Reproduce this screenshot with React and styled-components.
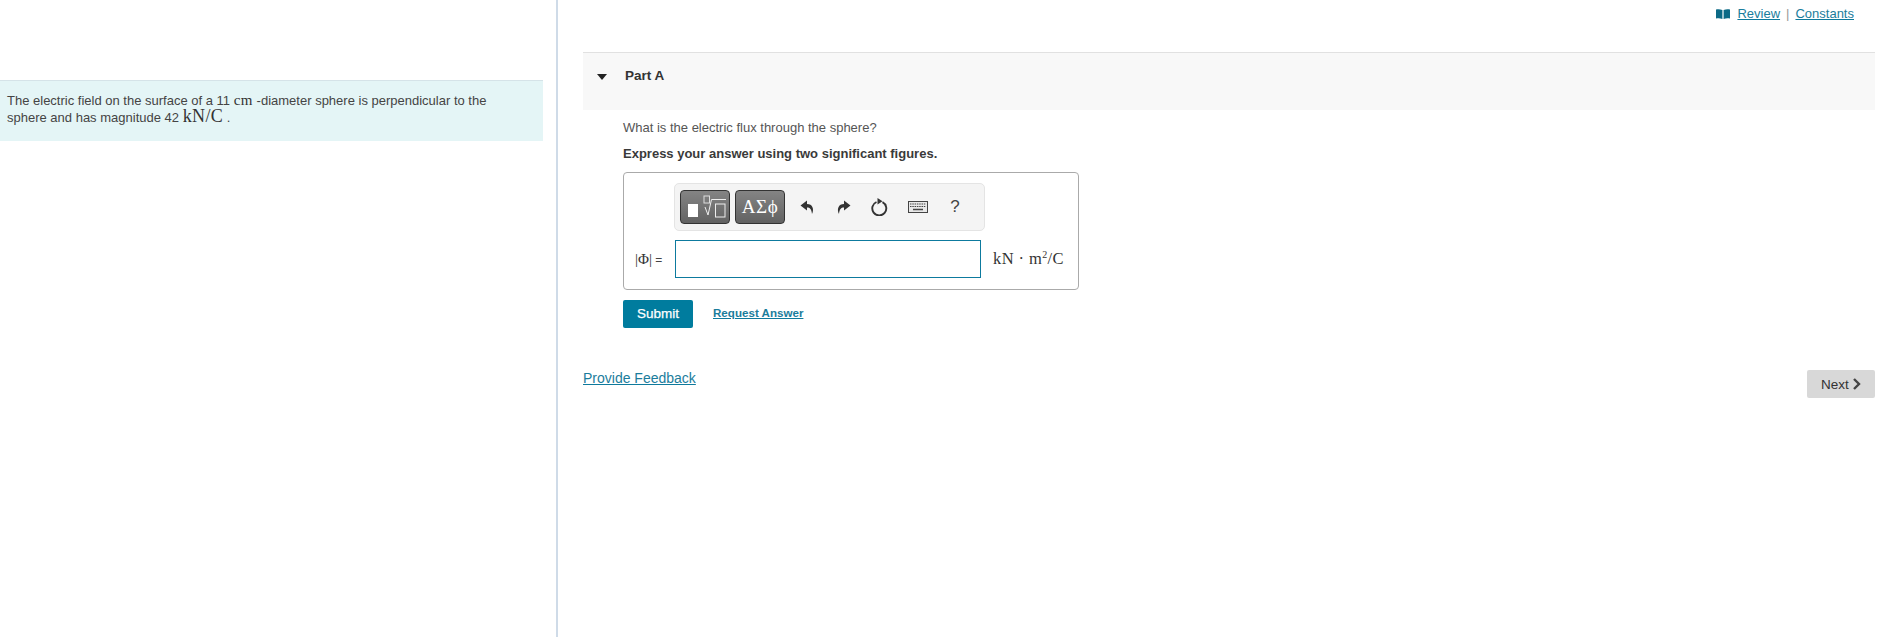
import React from "react";
import styled, { createGlobalStyle } from "styled-components";

const Global = createGlobalStyle`
  html, body { margin: 0; padding: 0; background: #fff; }
  body { font-family: "Liberation Sans", Arial, sans-serif; color: #333; }
`;
const Page = styled.div`display: flex; width: 1888px; height: 637px; overflow: hidden;`;
const LeftPane = styled.aside`
  width: 556px; height: 637px; flex: none;
  border-right: 2px solid #cfdbe8; padding-top: 80px; box-sizing: content-box;
`;
const Intro = styled.div`
  width: 543px; height: 61px; box-sizing: border-box; background: #e4f5f6;
  border-top: 1px solid #d5e3e8; padding: 11px 0 0 7px;
  font-size: 13px; line-height: 17px; color: #444;
`;
const MathText = styled.span`
  font-family: "Liberation Serif", "DejaVu Serif", serif; line-height: 0;
  font-size: ${p => p.$size || 15}px; letter-spacing: ${p => p.$track || 0}px; color: #333;
`;
const RightPane = styled.main`flex: 1; padding-right: 13px; padding-left: 25px; display: flex; flex-direction: column;`;
const TopLinks = styled.div`
  height: 52px; display: flex; justify-content: flex-end; align-items: flex-start;
  padding: 6px 21px 0 0; box-sizing: border-box; font-size: 13px; line-height: 15px; color: #999; gap: 6px;
`;
const Link = styled.a`color: #1b7d9c; text-decoration: underline; text-decoration-color: #0f7a9c;`;
const ReviewLink = styled(Link)`display: inline-flex; align-items: center; gap: 7px;`;
const PartHeader = styled.div`
  background: #f8f8f8; border-top: 1px solid #e1e1e1; box-sizing: content-box;
  display: flex; align-items: flex-start; padding-top: 15px; height: 42px;
`;
const Caret = styled.span`
  width: 0; height: 0; margin: 6px 0 0 14px;
  border-left: 5.5px solid transparent; border-right: 5.5px solid transparent; border-top: 6px solid #222;
`;
const PartTitle = styled.h2`
  margin: 0 0 0 18px; font-size: 13.5px; line-height: 16px; font-weight: bold; color: #333;
`;
const PartBody = styled.section`padding-left: 40px; padding-top: 10px;`;
const Question = styled.p`margin: 0; font-size: 13px; line-height: 15px; color: #555;`;
const Instruction = styled.p`margin: 11px 0 0; font-size: 13px; line-height: 15px; font-weight: bold; color: #3a3a3a;`;
const AnswerBox = styled.div`
  width: 456px; height: 118px; box-sizing: border-box; margin-top: 11px;
  border: 1px solid #aaa; border-radius: 4px; padding: 10px 0 0 50px;
`;
const Toolbar = styled.div`
  width: 311px; height: 48px; box-sizing: border-box; background: #f4f4f4; border: 1px solid #e4e4e4;
  border-radius: 5px; display: flex; align-items: center; padding-left: 5px;
`;
const TemplateButton = styled.button`
  width: ${p => p.$w}px; height: 34px; box-sizing: border-box; padding: 0; margin-right: 5px;
  border: 1px solid #333; border-radius: 4px; display: flex; align-items: center; justify-content: center;
  background: linear-gradient(#848484, #626262); color: #fff;
  font-family: "Liberation Serif", serif; font-size: 19px; letter-spacing: .5px;
`;
const ToolIcon = styled.button`
  width: ${p => p.$w || 36}px; height: 34px; padding: 0; border: 0; background: none;
  display: flex; align-items: center; justify-content: center; color: #444;
  font-family: "Liberation Sans", sans-serif; font-size: 17px;
`;
const InputRow = styled.div`display: flex; align-items: center; margin: 9px 0 0 -50px;`;
const VarLabel = styled.label`
  width: 51px; flex: none; box-sizing: border-box; padding: 1px 0 0 11px; font-size: 12px; color: #444; white-space: nowrap;
`;
const Input = styled.input`
  width: 306px; height: 38px; box-sizing: border-box; border: 1px solid #0d7a9e; outline: 0; background: #fff; padding: 0;
`;
const Unit = styled.span`
  margin-left: 12px; font-family: "Liberation Serif", serif; font-size: 16.5px; color: #333; white-space: nowrap; letter-spacing: .4px;
`;
const UnitPower = styled.sup`font-size: 10px; line-height: 0;`;
const Actions = styled.div`display: flex; align-items: flex-start; margin-top: 10px;`;
const Submit = styled.button`
  width: 70px; height: 28px; padding: 0 0 1px; border: 0; border-radius: 2px; background: #007c9e; color: #fff;
  font-family: "Liberation Sans", sans-serif; font-size: 13.5px; font-weight: normal;
  -webkit-text-stroke: .25px #fff;
`;
const RequestLink = styled(Link)`margin: 6px 0 0 20px; font-size: 11.6px; line-height: 14px; font-weight: bold;`;
const FooterRow = styled.div`display: flex; justify-content: space-between; align-items: flex-start; margin-top: 41px;`;
const Feedback = styled(Link)`font-size: 14px; line-height: 16px; margin-top: 1px;`;
const NextButton = styled.button`
  width: 68px; height: 28px; padding: 0; border: 0; border-radius: 2px; background: #d8d8d8; color: #333;
  font-family: "Liberation Sans", sans-serif; font-size: 13.5px;
  display: flex; align-items: center; justify-content: center; gap: 3px; margin-top: 1px;
`;

const BookIcon = () => (
  <svg width="14" height="10" viewBox="0 0 14 10">
    <path d="M0 .5C2 0 4 0 6.400 1v9C4 9 2 9 0 9.500z" fill="#0c6a86" />
    <path d="M14 .5C12 0 10 0 7.600 1v9C10 9 12 9 14 9.500z" fill="#0c6a86" />
  </svg>
);
const MathIcon = () => (
  <svg width="46" height="30" viewBox="0 0 46 30">
    <rect x="6" y="12" width="10" height="13" fill="#fff" />
    <rect x="22" y="4" width="5.500" height="7" fill="none" stroke="#ddd" strokeWidth="1" />
    <path d="M23 15l3 8 3.500-15.500h14.500" fill="none" stroke="#eee" strokeWidth="1" />
    <rect x="33.500" y="12" width="9.500" height="13" fill="none" stroke="#eee" strokeWidth="1" />
  </svg>
);
const Undo = () => (
  <svg width="16" height="15" viewBox="0 0 16 15">
    <path d="M7 0.500L0.500 5.500 7 10.500V7.500c3 0 4.500 1.500 5 6.500 2.500-5 .5-10-5-10z" fill="#333" />
  </svg>
);
const Redo = () => (
  <svg width="16" height="15" viewBox="0 0 16 15">
    <path d="M9 0.500l6.500 5L9 10.500V7.500c-3 0-4.500 1.500-5 6.500-2.500-5-.5-10 5-10z" fill="#333" />
  </svg>
);
const Reset = () => (
  <svg width="18" height="18" viewBox="0 0 18 18">
    <path d="M11.500 4.200A7 7 0 1 1 5.500 4" fill="none" stroke="#333" strokeWidth="1.900" />
    <path d="M6.500 0L11.500 3.200L6.500 6.500z" fill="#333" />
  </svg>
);
const Keyboard = () => (
  <svg width="20" height="12" viewBox="0 0 20 12">
    <rect x=".5" y=".5" width="19" height="11" fill="#e8e8e8" stroke="#444" />
    <path d="M2 3h16M2 5.500h16" stroke="#444" strokeWidth="1.200" strokeDasharray="1.500 .8" />
    <path d="M5 8.500h10" stroke="#444" strokeWidth="1.500" />
  </svg>
);

export default function App() {
  return (
    <Page>
      <Global />
      <LeftPane>
        <Intro>
          The electric field on the surface of a 11 <MathText $size={15} $track={0.5}>cm</MathText> -diameter sphere is perpendicular to the<br />
          sphere and has magnitude 42 <MathText $size={18} $track={0.4}>kN/C</MathText> .
        </Intro>
      </LeftPane>
      <RightPane>
        <TopLinks>
          <ReviewLink><BookIcon /><span>Review</span></ReviewLink>
          <span>|</span>
          <Link>Constants</Link>
        </TopLinks>
        <PartHeader>
          <Caret />
          <PartTitle>Part A</PartTitle>
        </PartHeader>
        <PartBody>
          <Question>What is the electric flux through the sphere?</Question>
          <Instruction>Express your answer using two significant figures.</Instruction>
          <AnswerBox>
            <Toolbar>
              <TemplateButton $w={50}><MathIcon /></TemplateButton>
              <TemplateButton $w={50}>ΑΣϕ</TemplateButton>
              <ToolIcon $w={35}><Undo /></ToolIcon>
              <ToolIcon $w={36}><Redo /></ToolIcon>
              <ToolIcon $w={38}><Reset /></ToolIcon>
              <ToolIcon $w={37}><Keyboard /></ToolIcon>
              <ToolIcon $w={38}>?</ToolIcon>
            </Toolbar>
            <InputRow>
              <VarLabel><MathText $size={15}>|Φ|</MathText> =</VarLabel>
              <Input aria-label="answer" />
              <Unit>kN · m<UnitPower>2</UnitPower>/C</Unit>
            </InputRow>
          </AnswerBox>
          <Actions>
            <Submit>Submit</Submit>
            <RequestLink>Request Answer</RequestLink>
          </Actions>
        </PartBody>
        <FooterRow>
          <Feedback>Provide Feedback</Feedback>
          <NextButton>Next
            <svg width="9" height="12" viewBox="0 0 9 12"><path d="M2 1l5 5-5 5" fill="none" stroke="#444" strokeWidth="2.400" /></svg>
          </NextButton>
        </FooterRow>
      </RightPane>
    </Page>
  );
}
